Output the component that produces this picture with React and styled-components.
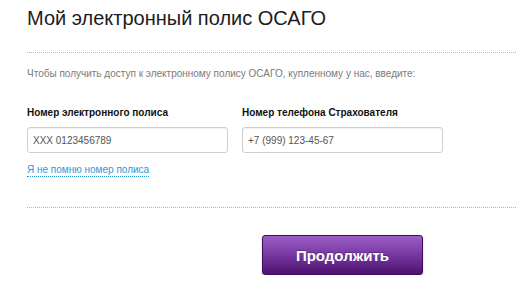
import React, { useState } from 'react'
import styled, { createGlobalStyle } from 'styled-components'

const GlobalStyle = createGlobalStyle`
    html, body {
        margin: 0;
        padding: 0;
        background: #ffffff;
    }
    body {
        font-family: "Liberation Sans", Arial, sans-serif;
        color: #222;
    }
`

const Page = styled.div`
    padding-left: 27px;
    width: 489px;
`

const Title = styled.h1`
    margin: 6px 0 0;
    font-size: 20px;
    line-height: 24px;
    font-weight: normal;
    color: #1c1c1c;
`

const Divider = styled.hr`
    margin: ${props => props.top}px 0 0;
    border: 0;
    border-top: 1px dotted #b5b5b5;
    height: 0;
`

const Intro = styled.p`
    margin: 14px 0 0;
    font-size: 10px;
    line-height: 14px;
    color: #7a7a7a;
`

const Fields = styled.div`
    margin-top: 25px;
    display: grid;
    grid-template-columns: 201px 201px;
    column-gap: 14px;
    align-items: start;
`

const Field = styled.div`
    display: flex;
    flex-direction: column;
`

const Label = styled.label`
    font-size: 10px;
    line-height: 14px;
    font-weight: bold;
    color: #111;
`

const Input = styled.input`
    box-sizing: border-box;
    margin-top: 7px;
    width: 100%;
    height: 26px;
    padding: 0 5px;
    border: 1px solid #cfcfcf;
    border-radius: 3px;
    box-shadow: inset 0 1px 1px rgba(0, 0, 0, 0.06);
    font-family: "Liberation Sans", Arial, sans-serif;
    font-size: 10px;
    color: #444;
    outline: none;

    &::placeholder {
        color: #555;
        opacity: 1;
    }
`

const ForgotLink = styled.a`
    align-self: flex-start;
    margin-top: 11px;
    font-size: 10px;
    line-height: 12px;
    color: #2b9ad6;
    text-decoration: none;
    border-bottom: 1px dotted #2b9ad6;
    cursor: pointer;
`

const Actions = styled.div`
    display: flex;
    padding-left: 235px;
    margin-top: 27px;
`

const SubmitButton = styled.button`
    width: 161px;
    height: 40px;
    border: 1px solid #3f0d5e;
    border-radius: 3px;
    background: linear-gradient(to bottom, #9b5ec4 0%, #7a3ba6 45%, #4c136d 100%);
    box-shadow: 0 1px 2px rgba(0, 0, 0, 0.25);
    color: #fff;
    font-family: "Liberation Sans", Arial, sans-serif;
    font-size: 15px;
    font-weight: bold;
    text-shadow: 0 -1px 0 rgba(0, 0, 0, 0.3);
    cursor: pointer;
`

const App = () => {
    const [policy, setPolicy] = useState('')
    const [phone, setPhone] = useState('')

    return (
        <>
            <GlobalStyle />
            <Page>
                <Title>Мой электронный полис ОСАГО</Title>
                <Divider top={22} />
                <Intro>Чтобы получить доступ к электронному полису ОСАГО, купленному у нас, введите:</Intro>
                <Fields>
                    <Field>
                        <Label>Номер электронного полиса</Label>
                        <Input
                            type='text'
                            placeholder='XXX 0123456789'
                            value={policy}
                            onChange={(e) => { setPolicy(e.target.value) }}
                        />
                        <ForgotLink>Я не помню номер полиса</ForgotLink>
                    </Field>
                    <Field>
                        <Label>Номер телефона Страхователя</Label>
                        <Input
                            type='text'
                            placeholder='+7 (999) 123-45-67'
                            value={phone}
                            onChange={(e) => { setPhone(e.target.value) }}
                        />
                    </Field>
                </Fields>
                <Divider top={30} />
                <Actions>
                    <SubmitButton>Продолжить</SubmitButton>
                </Actions>
            </Page>
        </>
    )
}

export default App
